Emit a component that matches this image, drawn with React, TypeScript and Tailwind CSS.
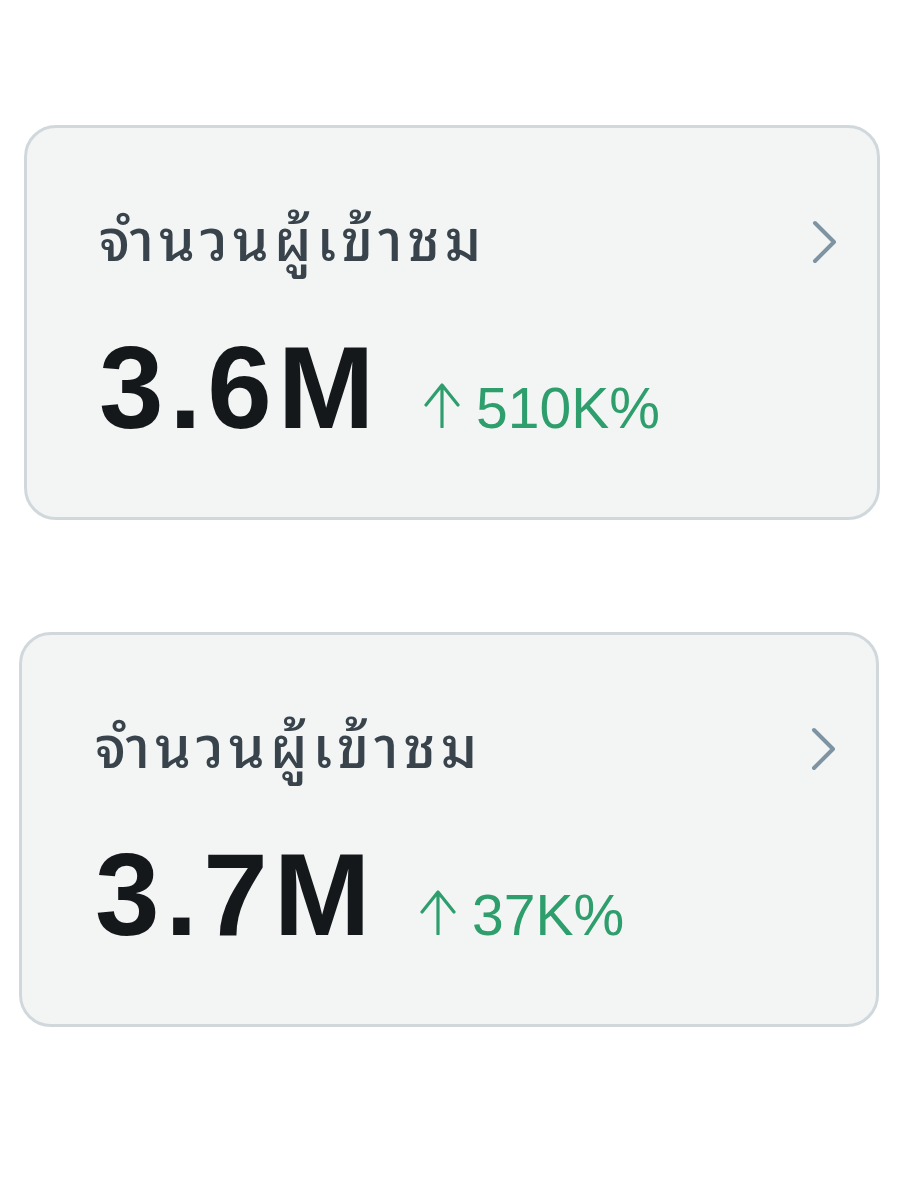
const cards = [
  { value: "3.6M", delta: "510K%", wrap: "ml-[24px] mr-[20px]", pad: "pl-[72px]" },
  { value: "3.7M", delta: "37K%", wrap: "ml-[19px] mr-[21px]", pad: "pl-[73px]" },
];

const thaiFont = '"Noto Sans Thai Looped", Loma, Garuda, "Noto Sans Thai", "Noto Sans", sans-serif';

function Chevron() {
  return (
    <svg className="mt-[12px]" width="28" height="44" viewBox="0 0 28 44" fill="none">
      <path d="M4 3 L23 22 L4 41" stroke="#7e94a3" strokeWidth="4" strokeLinecap="round" strokeLinejoin="round" />
    </svg>
  );
}

function ArrowUp() {
  return (
    <svg width="36" height="46" viewBox="0 0 36 46" fill="none">
      <path d="M18 3 V45 M2 23 L18 3 L34 23" stroke="#2e9e6c" strokeWidth="3.2" strokeLinecap="round" strokeLinejoin="round" />
    </svg>
  );
}

function StatCard({ value, delta, wrap, pad }: { value: string; delta: string; wrap: string; pad: string }) {
  return (
    <div className={`${wrap} h-[395px] rounded-[32px] border-[3px] border-[#d1d8dc] bg-[#f3f5f5] ${pad} pr-[38px] pt-[68px]`}>
      <div className="flex items-center justify-between">
        <span className="text-[57px] font-medium leading-[80px] tracking-[5px] text-[#38434b]" style={{ fontFamily: thaiFont }}>
          จำนวนผู้เข้าชม
        </span>
        <Chevron />
      </div>
      <div className="mt-[54px] flex items-baseline" style={{ fontFamily: '"Liberation Sans", Arial, sans-serif' }}>
        <span className="text-[116px] font-bold leading-none tracking-[0.05em] text-[#15181b]">{value}</span>
        <span className="ml-[44px] flex items-baseline text-[57px] leading-none text-[#2e9e6c]">
          <ArrowUp />
          <span className="ml-[16px]">{delta}</span>
        </span>
      </div>
    </div>
  );
}

export default function App() {
  return (
    <div className="min-h-[1200px] w-[900px] bg-white pt-[125px]">
      <StatCard {...cards[0]} />
      <div className="h-[112px]" />
      <StatCard {...cards[1]} />
    </div>
  );
}
